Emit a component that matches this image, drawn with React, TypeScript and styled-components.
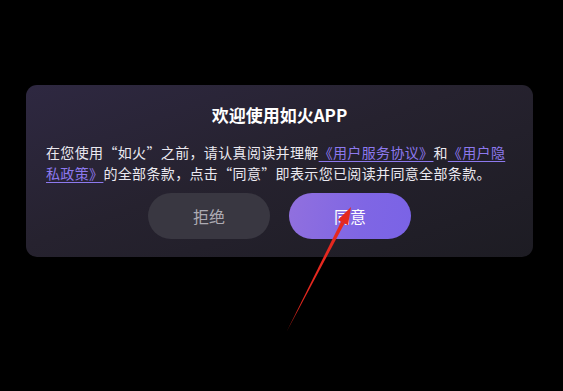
import React from "react";
import styled, { createGlobalStyle } from "styled-components";

const Global = createGlobalStyle`
  html, body { margin: 0; padding: 0; background: #000; }
  body { font-family: "Noto Sans CJK SC", "Noto Sans", sans-serif; }
`;

const Page = styled.div`
  position: relative;
  width: 563px;
  height: 391px;
  background: #000;
  padding: 85px 0 0 26px;
  box-sizing: border-box;
  overflow: hidden;
`;

const Card = styled.div`
  width: 507px;
  box-sizing: border-box;
  border-radius: 11px;
  background: linear-gradient(160deg, #2e2841 0%, #26222f 45%, #1d1c23 100%);
  padding: 18px 20px 18px 20px;
  display: flex;
  flex-direction: column;
  align-items: stretch;
`;

const Title = styled.div`
  color: #ffffff;
  font-size: 17px;
  font-weight: 700;
  line-height: 24px;
  text-align: center;
`;

const Body = styled.p`
  margin: 15px 0 0 0;
  color: #ebe9f0;
  font-size: 14px;
  line-height: 21px;
  letter-spacing: 0.35px;
`;

const Link = styled.a`
  color: #8d79ee;
  text-decoration: underline;
  text-underline-offset: 3px;
  text-decoration-thickness: 1px;
`;

const Buttons = styled.div`
  margin-top: 9px;
  display: flex;
  justify-content: center;
  gap: 19px;
`;

const Button = styled.button<{ $primary?: boolean }>`
  width: 122px;
  height: 46px;
  border: none;
  border-radius: 23px;
  font-family: inherit;
  font-size: 16px;
  color: ${(p) => (p.$primary ? "#ffffff" : "#adabb3")};
  background: ${(p) =>
    p.$primary
      ? "linear-gradient(100deg, #9170de 0%, #7f66e4 60%, #7a63e6 100%)"
      : "#393741"};
  cursor: pointer;
`;

const Arrow = styled.svg`
  position: absolute;
  left: 0;
  top: 0;
  pointer-events: none;
`;

export default function App() {
  return (
    <>
      <Global />
      <Page>
        <Card>
          <Title>欢迎使用如火APP</Title>
          <Body>
            在您使用“如火”之前，请认真阅读并理解<Link>《用户服务协议》</Link>和
            <Link>《用户隐私政策》</Link>的全部条款，点击“同意”即表示您已阅读并同意全部条款。
          </Body>
          <Buttons>
            <Button>拒绝</Button>
            <Button $primary>同意</Button>
          </Buttons>
        </Card>
        <Arrow width="563" height="391" viewBox="0 0 563 391">
          <polygon
            points="287,331 341.2,221.4 344.6,223.2"
            fill="#e5281f"
          />
          <polygon
            points="351,207 348,225.2 337.8,220"
            fill="#e5281f"
          />
        </Arrow>
      </Page>
    </>
  );
}
